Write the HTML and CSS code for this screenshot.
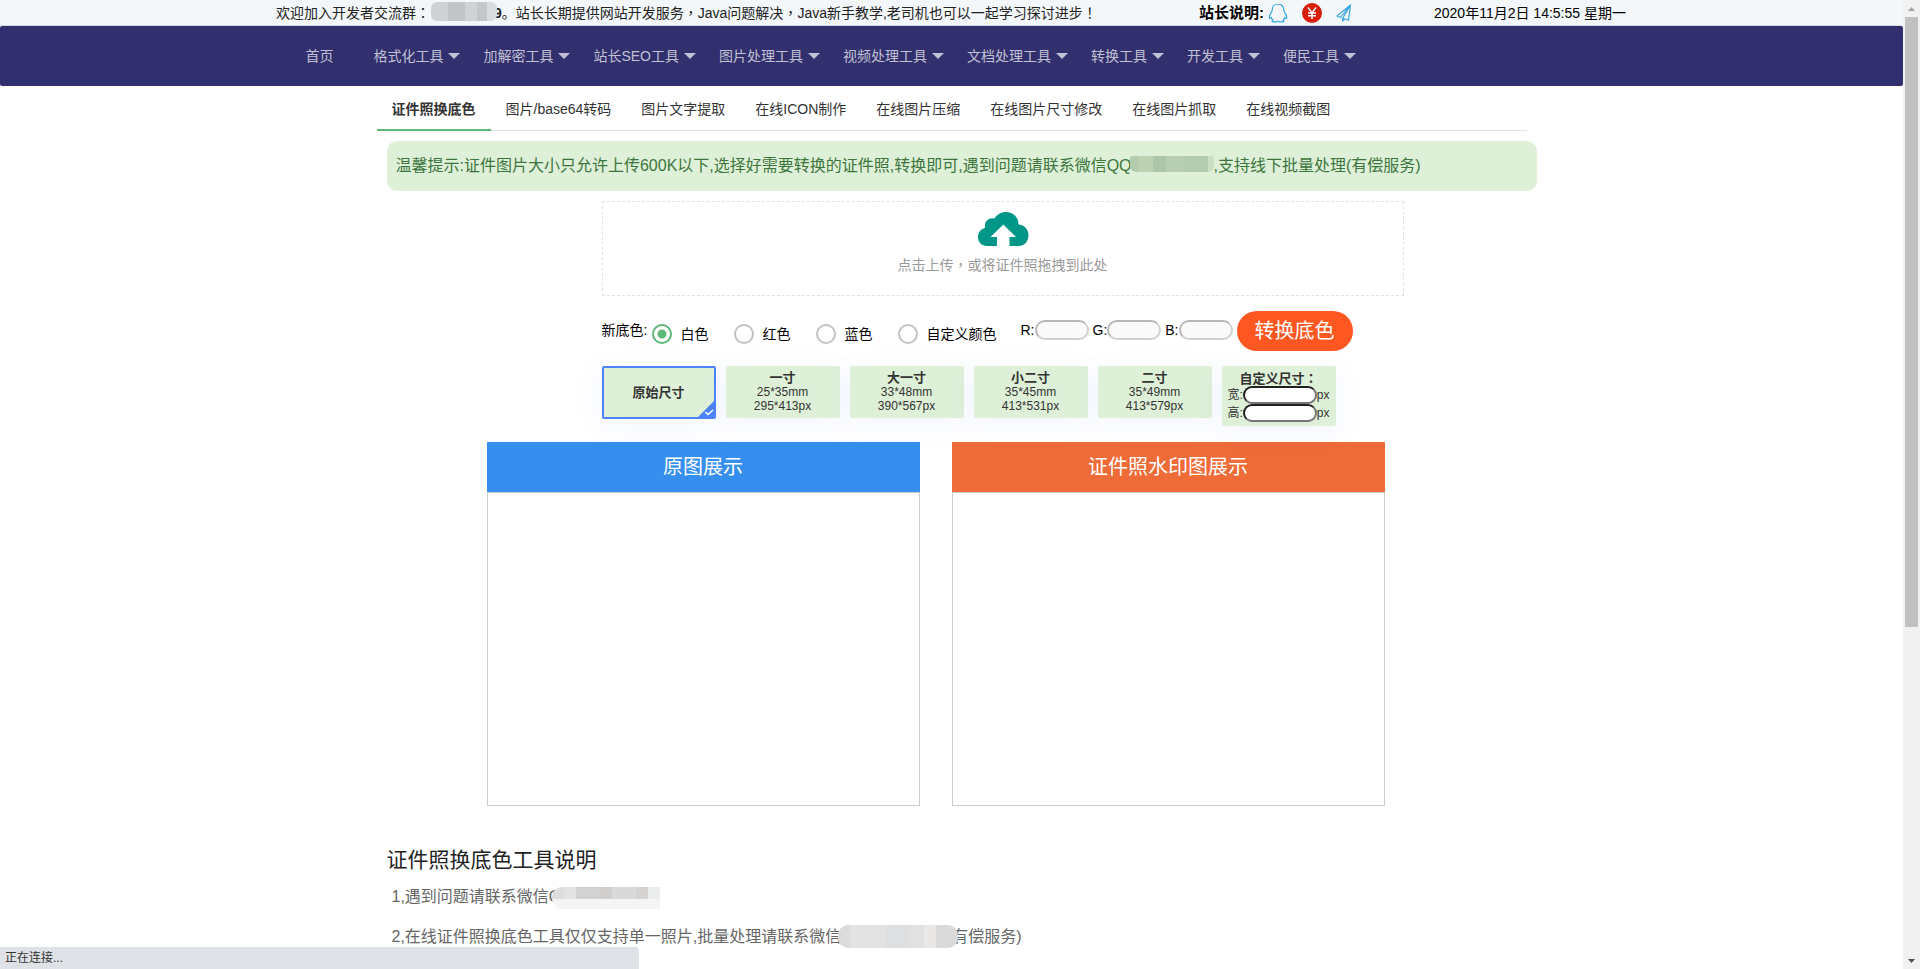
FILE: index.html
```html
<!DOCTYPE html>
<html lang="zh-CN">
<head>
<meta charset="utf-8">
<title>证件照换底色</title>
<link rel="stylesheet" href="styles.css">
</head>
<body>
<div class="page">
  <header class="topbar">
    <p class="notice">欢迎加入开发者交流群<span class="mid" lang="zh-TW">：</span><span class="mosaic mosaic-top"></span><b>9</b>。站长长期提供网站开发服务<span class="mid" lang="zh-TW">，</span>Java问题解决<span class="mid" lang="zh-TW">，</span>Java新手教学,老司机也可以一起学习探讨进步<span class="mid" lang="zh-TW">！</span></p>
    <div class="owner">
      <strong>站长说明:</strong>
      <a href="#" aria-label="QQ"><svg width="20" height="20" viewBox="0 0 20 20" fill="none" stroke="#3aa5e0" stroke-width="1.2" stroke-linejoin="round"><path d="M10 1C6.300 1 4.200 3.600 4.200 7c0 .9-.3 1.500-.9 2.300C2 11.200 1.100 13.200 1.300 15c.1.700.8.600 1.900-.7.300 1.100.9 2 1.800 2.700-1.300.5-1.200 1.700.5 1.900 1.800.2 3.300 0 4.500-.7 1.200.7 2.700.9 4.500.7 1.700-.2 1.800-1.400.5-1.900.9-.7 1.500-1.600 1.800-2.700 1.100 1.300 1.800 1.400 1.900.7.200-1.800-.7-3.800-2-5.700-.6-.8-.9-1.400-.9-2.300C15.800 3.600 13.700 1 10 1z"/></svg></a>
      <a href="#" aria-label="打赏"><svg width="20" height="20" viewBox="0 0 20 20"><circle cx="10" cy="10" r="10" fill="#d81e06"/><path d="M6 4.500l4 5.200 4-5.200M10 9.700v6.300M6 10h8M6 12.800h8" fill="none" stroke="#fff" stroke-width="1.500"/></svg></a>
      <a href="#" aria-label="联系"><svg width="16" height="18" viewBox="0 0 16 18" fill="none" stroke="#3aa5e0" stroke-width="1.200" stroke-linejoin="round"><path d="M14.500 1L1 12l3.500 1.500L14.500 1l-8 13.500V17l2-2M6.500 14.200l6 2L14.500 1"/></svg></a>
    </div>
    <time class="clock">2020年11月2日 14:5:55 星期一</time>
  </header>

  <nav class="mainnav">
    <a href="#">首页</a>
    <a href="#" class="more">格式化工具</a>
    <a href="#" class="more">加解密工具</a>
    <a href="#" class="more">站长SEO工具</a>
    <a href="#" class="more">图片处理工具</a>
    <a href="#" class="more">视频处理工具</a>
    <a href="#" class="more">文档处理工具</a>
    <a href="#" class="more">转换工具</a>
    <a href="#" class="more">开发工具</a>
    <a href="#" class="more">便民工具</a>
  </nav>

  <main class="content">
    <nav class="tabs">
      <a href="#" class="active">证件照换底色</a>
      <a href="#">图片/base64转码</a>
      <a href="#">图片文字提取</a>
      <a href="#">在线ICON制作</a>
      <a href="#">在线图片压缩</a>
      <a href="#">在线图片尺寸修改</a>
      <a href="#">在线图片抓取</a>
      <a href="#">在线视频截图</a>
    </nav>

    <p class="tip">温馨提示:证件图片大小只允许上传600K以下,选择好需要转换的证件照,转换即可,遇到问题请联系微信QQ<span class="mosaic mosaic-tip"></span>,支持线下批量处理(有偿服务)</p>

    <form class="tool">
      <button type="button" class="upload">
        <svg width="52" height="36" viewBox="0 0 52 36" fill="#009688"><path d="M20 35H10C4.500 35 1 31 1 26c0-4.500 2.800-8 7-9C7 10.500 11.500 6.500 17.500 7.500 20 3.500 24 1 29 1c7.500 0 12.500 5.500 12.500 12.500C47.500 14 51.500 18.500 51.500 24c0 6.500-4 11-10 11H32.500V26H39L26.300 13.500 13.500 26H20z"/></svg>
        <span>点击上传<span class="mid" lang="zh-TW">，</span>或将证件照拖拽到此处</span>
      </button>

      <div class="colors">
        <span class="caption">新底色:</span>
        <label class="radio"><input type="radio" name="bg" checked>白色</label>
        <label class="radio"><input type="radio" name="bg">红色</label>
        <label class="radio"><input type="radio" name="bg">蓝色</label>
        <label class="radio"><input type="radio" name="bg">自定义颜色</label>
        <div class="rgb">
          <label>R:<input type="text"></label>
          <label>G:<input type="text"></label>
          <label>B:<input type="text"></label>
        </div>
        <button type="button" class="convert">转换底色</button>
      </div>

      <div class="sizes">
        <button type="button" class="size selected"><b>原始尺寸</b><svg class="tick" width="18" height="18" viewBox="0 0 18 18"><path d="M18 0v18H0z" fill="#4e83fd"/><path d="M8.500 12l2.500 2.500 5-4.500" fill="none" stroke="#fff" stroke-width="1.600"/></svg></button>
        <button type="button" class="size"><b>一寸</b><span>25*35mm</span><span>295*413px</span></button>
        <button type="button" class="size"><b>大一寸</b><span>33*48mm</span><span>390*567px</span></button>
        <button type="button" class="size"><b>小二寸</b><span>35*45mm</span><span>413*531px</span></button>
        <button type="button" class="size"><b>二寸</b><span>35*49mm</span><span>413*579px</span></button>
        <div class="size custom"><b>自定义尺寸<span class="mid" lang="zh-TW">：</span></b>
          <label>宽:<input type="text">px</label>
          <label>高:<input type="text">px</label>
        </div>
      </div>
    </form>

    <div class="panels">
      <section class="panel"><h2 class="blue">原图展示</h2><div class="preview"></div></section>
      <section class="panel"><h2 class="orange">证件照水印图展示</h2><div class="preview"></div></section>
    </div>

    <section class="help">
      <h2>证件照换底色工具说明</h2>
      <p>1,遇到问题请联系微信Q<span class="mosaic mosaic-a"></span></p>
      <p>2,在线证件照换底色工具仅仅支持单一照片,批量处理请联系微信<span class="mosaic mosaic-b"></span>有偿服务)</p>
    </section>
  </main>
</div>

<div class="scrollbar">
  <svg width="17" height="17" viewBox="0 0 17 17"><path d="M5 11l3.500-4 3.500 4z" fill="#a3a3a3"/></svg>
  <div class="thumb"></div>
  <svg width="17" height="17" viewBox="0 0 17 17"><path d="M5 7l3.500 4L12 7z" fill="#505050"/></svg>
</div>
<div class="status">正在连接...</div>
</body>
</html>
```
FILE: styles.css
```css
* { box-sizing: border-box; }
html, body { height: 100%; }
body {
  margin: 0;
  overflow: hidden;
  background: #fff;
  color: #000;
  font: 14px/24px "Liberation Sans", "Noto Sans CJK SC", sans-serif;
}
p, h2 { margin: 0; font-weight: 400; }
a { color: inherit; text-decoration: none; }
svg { display: block; flex: none; }
button, input { font: inherit; color: inherit; margin: 0; padding: 0; }
button { border: 0; background: none; cursor: pointer; }

/* full-width punctuation centred in its box */
.mid { font-family: "Noto Sans CJK TC", sans-serif; line-height: 1; }

.page { margin-right: 17px; }

.topbar {
  display: flex;
  align-items: center;
  height: 26px;
  padding-left: 276px;
  background: #f3f7f9;
  border-bottom: 1px solid #d8dadc;
  white-space: nowrap;
}
.notice { flex: none; width: 923px; color: #222; }
.owner { display: flex; align-items: center; width: 235px; flex: none; }
.owner strong { font-size: 15px; margin-right: 4px; }
.owner a { margin-right: 14px; }

.mosaic { position: relative; display: inline-block; vertical-align: middle; }
.mosaic-top {
  width: 66px; height: 19px; margin: -4px -3px 0 1px;
  border-radius: 6px;
  background: linear-gradient(90deg, #d0d1d2 0 17px, #c3c4c5 17px 34px, #d0d3d5 34px 46px, #c4c6c8 46px 56px, #d9dddf 56px);
}
.mosaic-tip {
  width: 84px; height: 16px; margin: -6px 0 0 -2px;
  border-radius: 2px 2px 6px 6px;
  background: linear-gradient(90deg, #b3cbae 0 8px, #bdd0b2 8px 23px, #adc6ab 23px 36px, #b7cdb1 36px 54px, #b3ccb1 54px 78px, #cbdfc6 78px);
}
.mosaic-a {
  width: 108px; height: 22px; margin: 0 0 0 -9px;
  border-radius: 10px 0 0 10px;
  background:
    linear-gradient(180deg, transparent 0 12px, #f5f5f5 12px),
    linear-gradient(90deg, #dedede 0 12px, #e3e3e3 12px 24px, #d2d2d2 24px 48px, #cfcecd 48px 60px, #d9d9d9 60px 84px, #d4d3d2 84px 96px, #ebecec 96px);
}
.mosaic-b {
  width: 120px; height: 23px; margin: -2px -6px 0 -3px;
  border-radius: 10px;
  background: linear-gradient(90deg, #dcdcdc 0 12px, #e3e3e4 12px 48px, #dedfe0 48px 72px, #e1e1e1 72px 86px, #e9e8e6 86px 98px, #dadada 98px);
}

.mainnav {
  display: flex;
  height: 60px;
  padding-left: 15%;
  border-radius: 2px;
  background: #312f6e;
  color: #c1c1d3;
  line-height: 60px;
  white-space: nowrap;
}
.mainnav a { position: relative; padding: 0 20px; }
.mainnav .more::after {
  content: "";
  position: absolute;
  right: 3px;
  top: 27px;
  border: 6px solid transparent;
  border-top-color: #c1c1d3;
  border-bottom: 0;
}

.content { max-width: 1150px; margin: 0 auto; padding-top: 3px; }
.tabs { display: flex; border-bottom: 1px solid #e2e2e2; line-height: 40px; color: #333; white-space: nowrap; }
.tabs a { padding: 0 15px; margin-bottom: -1px; border-bottom: 2px solid transparent; }
.tabs .active { border-color: #5fb878; font-weight: 700; }

.tip {
  margin: 10px -10px 0 10px;
  padding: 13px 9px;
  border-radius: 10px;
  background: #dff0d8;
  color: #3c763d;
  font-size: 16px;
  white-space: nowrap;
}

.tool { margin: 10px 0 0 225px; }
.upload {
  display: flex;
  flex-direction: column;
  align-items: center;
  gap: 6px;
  width: 802px;
  height: 95px;
  padding-top: 9px;
  border: 1px dashed #e2e2e2;
  color: #999;
}

.colors { display: flex; align-items: center; height: 40px; margin-top: 15px; white-space: nowrap; }
.caption { width: 50px; margin-bottom: 2px; }
.radio { display: flex; align-items: center; margin: 5px 25px 0 0; }
.radio input {
  appearance: none;
  width: 20px;
  height: 20px;
  margin-right: 9px;
  border: 2px solid #c2c2c2;
  border-radius: 50%;
}
.radio input:checked { border-color: #5fb878; background: radial-gradient(circle, #5fb878 0 4px, #fff 5px); }
.rgb { display: flex; gap: 4px; margin: 0 0 2px -1px; }
.rgb label { display: flex; align-items: center; }
.rgb input {
  width: 54px;
  height: 20px;
  border: 2px solid;
  border-color: #b8b8b8 #d0d0d0 #d0d0d0 #b8b8b8;
  border-radius: 10px;
  background: #fafafa;
}
.convert {
  width: 116px;
  height: 40px;
  margin-left: 4px;
  border-radius: 20px;
  background: #ff5722;
  color: #fff;
  font-size: 20px;
}

.sizes { display: flex; align-items: flex-start; gap: 10px; height: 76px; margin-top: 15px; }
.size {
  position: relative;
  display: flex;
  flex-direction: column;
  align-items: center;
  justify-content: center;
  width: 114px;
  height: 52px;
  border-radius: 2px;
  background: #dff0d8;
  box-shadow: 0 6px 30px rgba(78, 131, 253, 0.08);
  color: #333;
  font-size: 12px;
  line-height: 14px;
}
.size b { font-size: 13px; }
.selected { height: 53px; border: 2px solid #4e83fd; }
.tick { position: absolute; right: -1px; bottom: -1px; }
.custom { height: 60px; }
.custom label { display: flex; align-items: center; line-height: 18px; }
.custom input {
  width: 74px;
  height: 18px;
  border: 2px inset #767676;
  border-radius: 9px;
  background: #fff;
}

.panels { display: flex; gap: 32px; margin-left: 110px; }
.panel { width: 433px; }
.panel h2 { color: #fff; font-size: 20px; line-height: 50px; text-align: center; }
.blue { background: #368fee; }
.orange { background: #ef6b37; }
.preview { height: 314px; border: 1px solid #ccc; }

.help { margin: 38px 0 0 10px; color: #666; font-size: 16px; line-height: 40px; white-space: nowrap; }
.help h2 { margin-bottom: 1px; color: #222; font-size: 21px; line-height: 32px; }
.help p { height: 40px; padding-left: 5px; }

.scrollbar {
  position: fixed;
  inset: 0 0 0 auto;
  display: flex;
  flex-direction: column;
  width: 17px;
  background: #f1f1f1;
}
.thumb { width: 13px; height: 63%; margin: 0 2px auto; background: #c1c1c1; }

.status {
  position: fixed;
  left: 0;
  bottom: 0;
  width: 33.3%;
  height: 22px;
  padding-left: 5px;
  border-radius: 0 4px 0 0;
  background: #dee1e6;
  color: #333;
  font-size: 12px;
  line-height: 22px;
}
```
